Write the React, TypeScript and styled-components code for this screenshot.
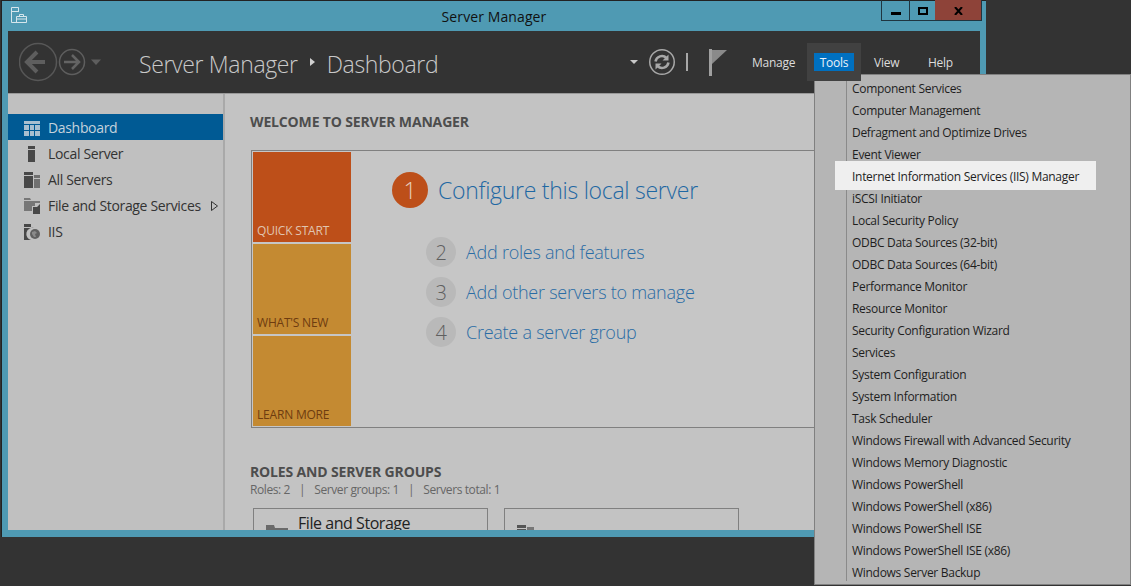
import React from 'react'
import styled, { createGlobalStyle } from 'styled-components'

const GlobalStyle = createGlobalStyle`
  html, body {
    margin: 0;
    padding: 0;
    background: #333333;
    overflow: hidden;
  }
  body {
    font-family: "Open Sans", "Noto Sans", sans-serif;
  }
`

const Page = styled.div`
  position: relative;
  width: 1131px;
  height: 586px;
  overflow: hidden;
  background: #333333;
`

const Win = styled.div`
  display: flex;
  flex-direction: column;
  box-sizing: border-box;
  width: 985px;
  height: 537px;
  margin-left: 1px;
  padding: 0 6px 7px 6px;
  background: #4f9ab3;
  border-top: 1px solid #222222;
  border-left: 1px solid #222222;
`

const TitleBar = styled.div`
  position: relative;
  display: flex;
  align-items: center;
  justify-content: center;
  flex: 0 0 30px;
  font-size: 14px;
  letter-spacing: 0.1px;
  color: #111111;
`

const AppIcon = styled.svg`
  position: absolute;
  left: 2px;
  top: 6px;
`

const WinControls = styled.div`
  position: absolute;
  right: -2px;
  top: -1px;
  display: flex;
  height: 21px;
  border: 1px solid #1f3540;
  border-top: none;
  box-sizing: border-box;
`

const WinButton = styled.div<{ $w: number; $close?: boolean; $drop?: number }>`
  display: flex;
  align-items: center;
  justify-content: center;
  box-sizing: border-box;
  width: ${p => p.$w}px;
  padding-top: ${p => p.$drop ?? 0}px;
  background: ${p => (p.$close ? '#8e4339' : 'transparent')};
  border-left: ${p => (p.$close ? 'none' : '1px solid #1f3540')};
  &:first-child {
    border-left: none;
  }
`

const Header = styled.div`
  display: flex;
  align-items: center;
  flex: 0 0 62px;
  padding-left: 11px;
  background: #333333;
  border-bottom: 1px solid #999999;
  box-sizing: content-box;
`

const NavGroup = styled.div`
  display: flex;
  align-items: center;
  width: 120px;
  flex: none;
`

const Crumbs = styled.div`
  display: flex;
  align-items: center;
  padding-top: 3px;
  font-size: 23px;
  font-weight: 300;
  letter-spacing: -0.35px;
  color: #c9c9c9;
`

const CrumbArrow = styled.span`
  width: 0;
  height: 0;
  margin: 0 12px 4px 12px;
  border-left: 5px solid #d0d0d0;
  border-top: 4px solid transparent;
  border-bottom: 4px solid transparent;
`

const HeaderRight = styled.div`
  display: flex;
  align-items: center;
  margin-left: auto;
  padding-right: 6px;
`

const SmallDrop = styled.span`
  width: 0;
  height: 0;
  margin-right: 11px;
  border-top: 4px solid #c8c8c8;
  border-left: 4px solid transparent;
  border-right: 4px solid transparent;
`

const Pipe = styled.span`
  width: 2px;
  height: 18px;
  margin: 0 21px 0 11px;
  background: #a8a8a8;
`

const MenuLabel = styled.div<{ $active?: boolean }>`
  position: relative;
  z-index: 1;
  height: 18px;
  font-size: 12px;
  letter-spacing: -0.25px;
  line-height: 20px;
  color: #dcdcdc;
  ${p =>
    p.$active &&
    `
    color: #e8f2fa;
    width: 40px;
    text-align: center;
    &::before {
      content: '';
      position: absolute;
      z-index: -1;
      left: -7px;
      right: -7px;
      top: -10px;
      bottom: -10px;
      background: #414141;
    }
    &::after {
      content: '';
      position: absolute;
      z-index: -1;
      inset: 0;
      background: #0070c0;
    }
  `}
`

const MenuSlot = styled.div<{ $w: number }>`
  width: ${p => p.$w}px;
  display: flex;
`

const Body = styled.div`
  display: flex;
  flex: 1;
  min-height: 0;
  overflow: hidden;
`

const Sidebar = styled.nav`
  flex: 0 0 215px;
  padding-top: 20px;
  background: #c0c0c0;
  border-right: 2px solid #a9a9a9;
`

const SideRow = styled.div<{ $active?: boolean }>`
  display: flex;
  align-items: center;
  box-sizing: border-box;
  height: 26px;
  padding: 1px 0 0 16px;
  font-size: 14px;
  letter-spacing: -0.33px;
  background: ${p => (p.$active ? '#005a94' : 'transparent')};
  color: ${p => (p.$active ? '#c4d2dc' : '#333333')};
`

const SideIcon = styled.svg`
  flex: none;
  margin-right: 8px;
`

const Chevron = styled.svg`
  margin-left: 10px;
`

const Content = styled.main`
  flex: 1;
  padding: 18px 0 0 25px;
  background: #c3c3c3;
  overflow: hidden;
`

const SectionTitle = styled.h2`
  margin: 0;
  font-size: 14px;
  line-height: 20px;
  font-weight: 700;
  letter-spacing: -0.15px;
  color: #4d4d4d;
`

const QuickBox = styled.div`
  display: flex;
  box-sizing: border-box;
  width: 700px;
  height: 278px;
  margin: 18px 0 34px 1px;
  padding: 1px;
  border: 1px solid #808080;
  background: #c6c6c6;
`

const Tiles = styled.div`
  display: flex;
  flex-direction: column;
  gap: 2px;
  flex: 0 0 98px;
`

const Tile = styled.div<{ $accent?: boolean }>`
  display: flex;
  align-items: flex-end;
  height: 90px;
  padding: 0 0 3px 4px;
  box-sizing: border-box;
  font-size: 12px;
  line-height: 16px;
  letter-spacing: -0.2px;
  background: ${p => (p.$accent ? '#bd4f19' : '#c48a32')};
  color: ${p => (p.$accent ? '#e0c4b0' : '#6e3c10')};
`

const Steps = styled.div`
  display: flex;
  flex-direction: column;
  padding: 20px 0 0 41px;
`

const MainStep = styled.div`
  display: flex;
  align-items: center;
  gap: 10px;
  height: 36px;
  margin-bottom: 29px;
  font-size: 23px;
  font-weight: 300;
  letter-spacing: -0.27px;
  color: #1f68a3;
`

const MainNum = styled.span`
  display: flex;
  align-items: center;
  justify-content: center;
  width: 36px;
  height: 36px;
  border-radius: 50%;
  background: #bd4f19;
  color: #e6cdbc;
  font-size: 23px;
  font-weight: 300;
`

const SubStep = styled.div`
  display: flex;
  align-items: center;
  gap: 10px;
  height: 30px;
  margin: 0 0 10px 34px;
  font-size: 18px;
  font-weight: 300;
  letter-spacing: -0.25px;
  color: #2a6ca5;
`

const SubNum = styled.span`
  display: flex;
  align-items: center;
  justify-content: center;
  width: 30px;
  height: 30px;
  border-radius: 50%;
  background: #b9b9b9;
  color: #5f5f5f;
  font-size: 20px;
  font-weight: 300;
`

const Stats = styled.div`
  display: flex;
  gap: 9px;
  margin-top: 0;
  font-size: 12px;
  line-height: 16px;
  letter-spacing: -0.4px;
  color: #666666;
`

const Cards = styled.div`
  display: flex;
  gap: 16px;
  margin: 10px 0 0 3px;
`

const Card = styled.div`
  position: relative;
  display: flex;
  align-items: flex-start;
  gap: 10px;
  box-sizing: border-box;
  width: 235px;
  height: 120px;
  padding: 3px 0 0 12px;
  border: 1px solid #808080;
  font-size: 16px;
  line-height: 22px;
  letter-spacing: -0.45px;
  color: #222222;
`

const CardIcon = styled.svg`
  flex: none;
  margin-top: 13px;
`

const CardCount = styled.span`
  position: absolute;
  right: 14px;
  top: 17px;
  font-size: 12px;
  color: #333333;
`

const CardName = styled.span<{ $low?: boolean }>`
  max-width: 140px;
  margin-top: ${p => (p.$low ? '14px' : '0')};
`

const DropMenu = styled.div`
  position: absolute;
  left: 814px;
  top: 74px;
  box-sizing: border-box;
  width: 317px;
  height: 511px;
  padding: 3px 0;
  background: #b5b5b5;
  border: 1px solid #808080;
  isolation: isolate;
  &::before {
    content: '';
    position: absolute;
    z-index: 0;
    left: 31px;
    top: 4px;
    bottom: 3px;
    width: 1px;
    background: #8a8a8a;
  }
  &::after {
    content: '';
    position: absolute;
    left: 0;
    top: -1px;
    width: 46px;
    height: 6px;
    background: #ececec;
  }
`

const DropItem = styled.div<{ $hot?: boolean }>`
  position: relative;
  height: 22px;
  padding-left: 37px;
  font-size: 12px;
  line-height: 22px;
  letter-spacing: -0.29px;
  color: #1e1e1e;
  white-space: nowrap;
  ${p =>
    p.$hot &&
    `
    &::before {
      content: '';
      position: absolute;
      z-index: 1;
      left: 20px;
      width: 261px;
      top: -5px;
      height: 29px;
      background: #efefef;
    }
  `}
`

const DropText = styled.span`
  position: relative;
  z-index: 2;
`

const toolItems = [
  'Component Services',
  'Computer Management',
  'Defragment and Optimize Drives',
  'Event Viewer',
  'Internet Information Services (IIS) Manager',
  'iSCSI Initiator',
  'Local Security Policy',
  'ODBC Data Sources (32-bit)',
  'ODBC Data Sources (64-bit)',
  'Performance Monitor',
  'Resource Monitor',
  'Security Configuration Wizard',
  'Services',
  'System Configuration',
  'System Information',
  'Task Scheduler',
  'Windows Firewall with Advanced Security',
  'Windows Memory Diagnostic',
  'Windows PowerShell',
  'Windows PowerShell (x86)',
  'Windows PowerShell ISE',
  'Windows PowerShell ISE (x86)',
  'Windows Server Backup',
]

const DashboardIcon = () => (
  <SideIcon width="16" height="16" viewBox="0 0 16 16">
    <rect y="1" width="16" height="3" fill="#a9bfcf" />
    <rect y="5" width="5" height="5" fill="#a9bfcf" />
    <rect x="6" y="5" width="4" height="5" fill="#a9bfcf" />
    <rect x="11" y="5" width="5" height="5" fill="#a9bfcf" />
    <rect y="11" width="5" height="5" fill="#a9bfcf" />
    <rect x="6" y="11" width="4" height="5" fill="#a9bfcf" />
    <rect x="11" y="11" width="5" height="5" fill="#a9bfcf" />
  </SideIcon>
)

const LocalIcon = () => (
  <SideIcon width="16" height="16" viewBox="0 0 16 16">
    <rect x="4" y="0" width="7" height="3" fill="#484848" />
    <rect x="4" y="4" width="7" height="12" fill="#484848" />
  </SideIcon>
)

const AllIcon = () => (
  <SideIcon width="16" height="16" viewBox="0 0 16 16">
    <rect y="0" width="9" height="3" fill="#484848" />
    <rect y="4" width="9" height="12" fill="#484848" />
    <rect x="10" y="3" width="6" height="3" fill="#707070" />
    <rect x="10" y="7" width="6" height="9" fill="#707070" />
  </SideIcon>
)

const FilesIcon = () => (
  <SideIcon width="16" height="16" viewBox="0 0 16 16">
    <path d="M0 0h6l1 2h-7z" fill="#777777" />
    <path d="M0 3h16v2h-5v3h-3v5h-8z" fill="#777777" />
    <path d="M9 9h4l3 -3v10h-7z" fill="#484848" />
  </SideIcon>
)

const IisIcon = () => (
  <SideIcon width="16" height="16" viewBox="0 0 16 16">
    <rect y="0" width="7" height="3" fill="#484848" />
    <path d="M0 4h10a6 6 0 0 0 -3 12h-7z" fill="#484848" />
    <circle cx="11" cy="10" r="5" fill="#606060" />
    <path d="M8 8l3 -1 2 2 -2 1 1 3 -2 0 -2 -3z" fill="#8a8a8a" />
  </SideIcon>
)

const App: React.FC = () => {
  return (
    <Page>
      <GlobalStyle />
      <Win>
        <TitleBar>
          <AppIcon width="17" height="17" viewBox="0 0 17 17" fill="none">
            <path d="M1.5 .5h7v4.500M1.500 .5v15h6M1.500 4.500h7" stroke="#d6e6ec" />
            <path d="M6.500 9.500h10v6h-10zM6.500 12h10M9.500 9.500v-2h4v2" stroke="#d6e6ec" />
          </AppIcon>
          Server Manager
          <WinControls>
            <WinButton $w={27} $drop={6}>
              <svg width="10" height="3"><rect width="10" height="3" fill="#000" /></svg>
            </WinButton>
            <WinButton $w={26} $drop={1}>
              <svg width="10" height="8" viewBox="0 0 10 8" fill="none">
                <rect x="1" y="1" width="8" height="6" stroke="#000" strokeWidth="2" />
              </svg>
            </WinButton>
            <WinButton $w={46} $close $drop={1}>
              <svg width="9" height="8" viewBox="0 0 9 8">
                <path d="M1 0l7 8M8 0l-7 8" stroke="#000" strokeWidth="2" fill="none" />
              </svg>
            </WinButton>
          </WinControls>
        </TitleBar>
        <Header>
          <NavGroup>
            <svg width="84" height="40" viewBox="0 0 84 40" fill="none">
              <circle cx="19" cy="20" r="18.500" stroke="#575757" strokeWidth="1.500" />
              <path d="M26 20H9M18 10l-10 10 10 10" stroke="#5e5e5e" strokeWidth="4" />
              <circle cx="53" cy="20" r="12.500" stroke="#5e5e5e" strokeWidth="1.500" />
              <path d="M45 20h14M53 13l7 7-7 7" stroke="#646464" strokeWidth="2.500" />
              <path d="M72 17.500h10l-5 5.500z" fill="#5e5e5e" />
            </svg>
          </NavGroup>
          <Crumbs>
            Server Manager
            <CrumbArrow />
            Dashboard
          </Crumbs>
          <HeaderRight>
            <SmallDrop />
            <svg width="26" height="26" viewBox="0 0 26 26" fill="none">
              <circle cx="13" cy="13" r="12.250" stroke="#a8a8a8" strokeWidth="1.500" />
              <path d="M6.500 12.500a6.500 6.500 0 0 1 11 -3.500M19.500 13.500a6.500 6.500 0 0 1 -11 3.500" stroke="#a8a8a8" strokeWidth="2.500" />
              <path d="M19.500 5.500v6h-6zM6.500 20.500v-6h6z" fill="#a8a8a8" />
            </svg>
            <Pipe />
            <svg width="18" height="27" viewBox="0 0 18 27">
              <rect width="3" height="27" fill="#a0a0a0" />
              <path d="M3 1h15l-15 14z" fill="#8a8a8a" />
            </svg>
            <MenuSlot $w={25} />
            <MenuSlot $w={62}><MenuLabel>Manage</MenuLabel></MenuSlot>
            <MenuSlot $w={60}><MenuLabel $active>Tools</MenuLabel></MenuSlot>
            <MenuSlot $w={54}><MenuLabel>View</MenuLabel></MenuSlot>
            <MenuSlot $w={46}><MenuLabel>Help</MenuLabel></MenuSlot>
          </HeaderRight>
        </Header>
        <Body>
          <Sidebar>
            <SideRow $active><DashboardIcon />Dashboard</SideRow>
            <SideRow><LocalIcon />Local Server</SideRow>
            <SideRow><AllIcon />All Servers</SideRow>
            <SideRow>
              <FilesIcon />File and Storage Services
              <Chevron width="7" height="10" viewBox="0 0 7 10" fill="none">
                <path d="M.5 .5l6 4.500-6 4.500z" stroke="#333333" />
              </Chevron>
            </SideRow>
            <SideRow><IisIcon />IIS</SideRow>
          </Sidebar>
          <Content>
            <SectionTitle>WELCOME TO SERVER MANAGER</SectionTitle>
            <QuickBox>
              <Tiles>
                <Tile $accent>QUICK START</Tile>
                <Tile>WHAT'S NEW</Tile>
                <Tile>LEARN MORE</Tile>
              </Tiles>
              <Steps>
                <MainStep><MainNum>1</MainNum>Configure this local server</MainStep>
                <SubStep><SubNum>2</SubNum>Add roles and features</SubStep>
                <SubStep><SubNum>3</SubNum>Add other servers to manage</SubStep>
                <SubStep><SubNum>4</SubNum>Create a server group</SubStep>
              </Steps>
            </QuickBox>
            <SectionTitle>ROLES AND SERVER GROUPS</SectionTitle>
            <Stats>
              <span>Roles: 2</span><span>|</span>
              <span>Server groups: 1</span><span>|</span>
              <span>Servers total: 1</span>
            </Stats>
            <Cards>
              <Card>
                <CardIcon width="22" height="16" viewBox="0 0 22 16">
                  <path d="M0 0h8l1 3h13v3h-22z" fill="#6a6a6a" />
                  <rect y="7" width="22" height="9" fill="#6a6a6a" />
                </CardIcon>
                <CardName>File and Storage Services</CardName>
                <CardCount>1</CardCount>
              </Card>
              <Card>
                <CardIcon width="17" height="16" viewBox="0 0 17 16">
                  <rect width="9" height="3" fill="#555555" />
                  <rect y="4" width="9" height="12" fill="#555555" />
                  <rect x="10" y="2" width="7" height="3" fill="#777777" />
                </CardIcon>
                <CardName $low>IIS</CardName>
                <CardCount>1</CardCount>
              </Card>
            </Cards>
          </Content>
        </Body>
      </Win>
      <DropMenu>
        {toolItems.map(item => (
          <DropItem key={item} $hot={item.startsWith('Internet')}>
            <DropText>{item}</DropText>
          </DropItem>
        ))}
      </DropMenu>
    </Page>
  )
}

export default App
